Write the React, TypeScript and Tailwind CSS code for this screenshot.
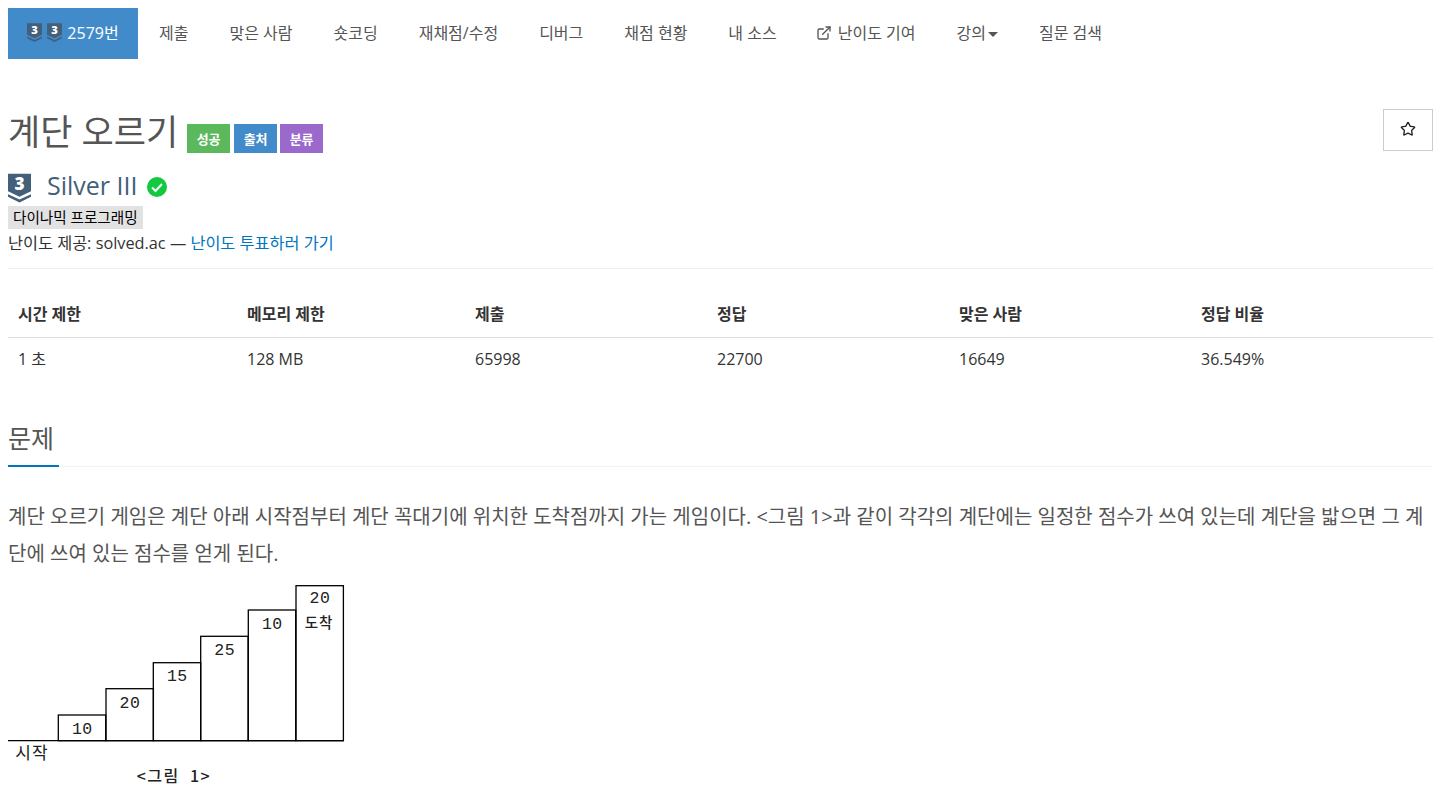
import React from "react";
import { ExternalLink, Star } from "lucide-react";

function Tier({ className }: { className?: string }) {
  return (
    <svg viewBox="0 0 24 30" className={className} aria-hidden>
      <path d="M0 0H24V18.5L12 24L0 18.5Z" fill="#435F7A" />
      <path d="M0 21.5L12 27L24 21.5V24L12 30L0 24Z" fill="#435F7A" />
      <text x="12" y="17.5" textAnchor="middle" fontSize="18" fontWeight="800" fill="#fff" fontFamily="'Open Sans', sans-serif">3</text>
    </svg>
  );
}

const navItems = ["제출", "맞은 사람", "숏코딩", "재채점/수정", "디버그", "채점 현황", "내 소스"];

function Stairs() {
  const steps = [
    { x: 50.3, y: 130, t: "10", ty: 149 },
    { x: 98, y: 103.7, t: "20", ty: 123 },
    { x: 145.3, y: 77.7, t: "15", ty: 96 },
    { x: 192.7, y: 51.3, t: "25", ty: 70 },
    { x: 240.3, y: 25, t: "10", ty: 44 },
    { x: 288, y: 0.7, t: "20", ty: 18 },
  ];
  return (
    <svg width="345" height="205" viewBox="0 0 345 205" className="block" aria-label="그림 1">
      <g fill="none" stroke="#000" strokeWidth="1.3">
        <path d="M0 155.7H335.5" />
        {steps.map((s) => (
          <rect key={s.x} x={s.x} y={s.y} width="47.4" height={155.7 - s.y} />
        ))}
      </g>
      <g fontFamily="'Liberation Mono', monospace" fontSize="16.5" fill="#222" textAnchor="middle" letterSpacing="0.5">
        {steps.map((s) => (
          <text key={s.x} x={s.x + 24} y={s.ty}>{s.t}</text>
        ))}
      </g>
      <g fontFamily="'Noto Sans CJK KR', sans-serif" fill="#222">
        <text x="311" y="43" fontSize="14.5" textAnchor="middle" letterSpacing="1" fontWeight="500">도착</text>
        <text x="24" y="174" fontSize="17" textAnchor="middle" letterSpacing="1" fontWeight="400">시작</text>
        <text x="166" y="197" fontSize="16" fontWeight="500" textAnchor="middle" letterSpacing="1.5" xmlSpace="preserve">&lt;그림  1&gt;</text>
      </g>
    </svg>
  );
}

export default function App() {
  return (
    <div className="h-[794px] w-[1451px] overflow-hidden bg-white pl-2 pr-[18px] pt-2 text-[16px] leading-[20px] text-[#333] font-['Open_Sans','Noto_Sans_CJK_KR',sans-serif]">
      <nav className="flex h-[51px] items-stretch">
        <div className="flex w-[130px] items-center justify-center bg-[#428bca] pb-[2px] text-white">
          <Tier className="h-[19px] w-[15px]" />
          <Tier className="ml-[5px] h-[19px] w-[15px]" />
          <span className="ml-[5px]">2579번</span>
        </div>
        <div className="flex items-center gap-px pb-[2px] pl-px text-[#555]">
          {navItems.map((n) => (
            <span key={n} className="px-5">{n}</span>
          ))}
          <span className="flex items-center px-5">
            <ExternalLink className="-ml-[2px] mr-[6px] h-[16px] w-[16px]" strokeWidth={2} />
            난이도 기여
          </span>
          <span className="flex items-center px-5">
            강의
            <span className="ml-[2px] mt-[3px] h-0 w-0 border-x-[5px] border-t-[5px] border-x-transparent border-t-[#555]" />
          </span>
          <span className="px-5">질문 검색</span>
        </div>
      </nav>

      <header className="mt-[47px] flex h-[46px] items-start justify-between">
        <div className="flex items-end">
          <h1 className="pt-[3px] text-[35px] leading-[46px] text-[#555]">계단 오르기</h1>
          <div className="mb-[2px] ml-[9px] flex text-[13px] font-bold text-white">
            <span className="flex h-[29px] w-[43px] items-center justify-center bg-[#5cb85c]">성공</span>
            <span className="ml-[4px] flex h-[29px] w-[43px] items-center justify-center bg-[#428bca]">출처</span>
            <span className="ml-[3px] flex h-[29px] w-[43px] items-center justify-center bg-[#9b69cb]">분류</span>
          </div>
        </div>
        <button className="mt-[3px] flex h-[42px] w-[50px] items-center justify-center border border-[#ccc] bg-white pb-[3px] text-[#222]">
          <Star className="h-[16px] w-[16px]" strokeWidth={2} />
        </button>
      </header>

      <div className="mt-[21px] flex h-[30px] items-center">
        <Tier className="h-[30px] w-[23px]" />
        <span className="-mt-[6px] ml-[16px] text-[25px] leading-[30px] text-[#435f7a]">Silver III</span>
        <svg viewBox="0 0 20 20" className="-mt-[2px] ml-[9px] h-[20px] w-[20px]" aria-hidden>
          <circle cx="10" cy="10" r="10" fill="#12c93f" />
          <path d="M5 10.5L8.5 14L15 7" fill="none" stroke="#fff" strokeWidth="2" />
        </svg>
      </div>
      <div className="mt-[3px] flex">
        <span className="h-[23px] bg-[#e2e2e2] px-[5px] text-[14.6px] leading-[23px] text-black">다이나믹 프로그래밍</span>
      </div>
      <div className="mt-[2px] text-[16.3px] leading-[24px]">
        난이도 제공: solved.ac — <span className="text-[#0076c0]">난이도 투표하러 가기</span>
      </div>

      <hr className="mt-[13px] border-0 border-t border-[#eee]" />

      <table className="mt-[23px] w-full table-fixed border-collapse text-left">
        <colgroup>
          <col className="w-[229px]" />
          <col className="w-[228px]" />
          <col className="w-[242px]" />
          <col className="w-[242px]" />
          <col className="w-[242px]" />
          <col className="w-[242px]" />
        </colgroup>
        <thead>
          <tr className="h-[45px] border-b border-[#ddd]">
            {["시간 제한", "메모리 제한", "제출", "정답", "맞은 사람", "정답 비율"].map((h) => (
              <th key={h} className="px-[10px] font-bold">{h}</th>
            ))}
          </tr>
        </thead>
        <tbody>
          <tr className="h-[44px]">
            {["1 초", "128 MB", "65998", "22700", "16649", "36.549%"].map((c) => (
              <td key={c} className="px-[10px]">{c}</td>
            ))}
          </tr>
        </tbody>
      </table>

      <section className="mt-[32px]">
        <div className="h-[54px] border-b border-[#eef5fa]">
          <h2 className="inline-block h-[54px] border-b-2 border-[#0076c0] pr-[5px] text-[25px] leading-[50px] text-[#555]">문제</h2>
        </div>
        <p className="mt-[31px] break-all text-[20px] leading-[37px] text-[#555]">
          계단 오르기 게임은 계단 아래 시작점부터 계단 꼭대기에 위치한 도착점까지 가는 게임이다. &lt;그림 1&gt;과 같이 각각의 계단에는 일정한 점수가 쓰여 있는데 계단을 밟으면 그 계단에 쓰여 있는 점수를 얻게 된다.
        </p>
        <div className="mt-[13px]">
          <Stairs />
        </div>
      </section>
    </div>
  );
}
